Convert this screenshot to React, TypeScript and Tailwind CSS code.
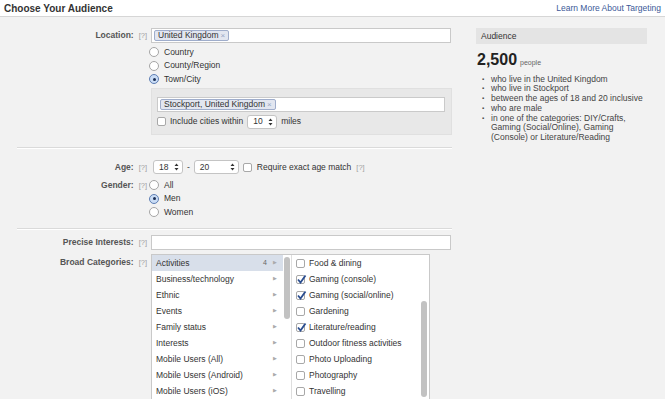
import React from "react";

function Help() {
  return <span className="text-[#a0a0a0] font-normal ml-[5px] text-[7.5px]">[?]</span>;
}

function Radio({ checked }: { checked?: boolean }) {
  return checked ? (
    <span className="w-[10px] h-[10px] rounded-full border border-[#5f7fb4] bg-[#c9dcf5] flex items-center justify-center shrink-0">
      <span className="w-[3px] h-[3px] rounded-full bg-[#1b2f55]" />
    </span>
  ) : (
    <span className="w-[10px] h-[10px] rounded-full border border-[#a5a5a5] bg-white shrink-0" />
  );
}

function Check({ checked }: { checked?: boolean }) {
  return (
    <span className="relative w-[9px] h-[9px] rounded-[2px] border border-[#a8a8a8] bg-white shrink-0">
      {checked && (
        <svg className="absolute -left-[1px] -top-[2px]" width="11" height="11" viewBox="0 0 11 11">
          <path d="M2 5.5 L4.5 8.5 L9.5 1.5" fill="none" stroke="#2a4d8f" strokeWidth="1.8" />
        </svg>
      )}
    </span>
  );
}

function Select({ value, width }: { value: string; width: string }) {
  return (
    <span className={`${width} h-[14px] flex items-center justify-between bg-white border border-[#c4c4c4] rounded-[3px] pl-[5px] pr-[3px] text-[8.5px] text-[#333]`}>
      {value}
      <svg width="5" height="8" viewBox="0 0 5 8">
        <path d="M0.5 3 L2.5 0.5 L4.5 3 Z M0.5 5 L2.5 7.5 L4.5 5 Z" fill="#333" />
      </svg>
    </span>
  );
}

function Token({ label }: { label: string }) {
  return (
    <span className="h-[11px] flex items-center bg-[#e2e6f0] border border-[#9fadcb] rounded-[2px] px-[3px] text-[8.5px] text-[#333]">
      {label}
      <span className="text-[#98a6c4] ml-[2px] text-[8px]">×</span>
    </span>
  );
}

function Label({ text }: { text: string }) {
  return (
    <div className="w-[147px] shrink-0 text-right font-bold text-[#555] text-[8.5px]">
      {text}
      <Help />
    </div>
  );
}

function Separator() {
  return <div className="ml-[17px] w-[435px] h-[2px] border-t border-[#dadada] border-b border-b-white" />;
}

const categories = [
  "Activities",
  "Business/technology",
  "Ethnic",
  "Events",
  "Family status",
  "Interests",
  "Mobile Users (All)",
  "Mobile Users (Android)",
  "Mobile Users (iOS)",
];

const activities: [string, boolean][] = [
  ["Food & dining", false],
  ["Gaming (console)", true],
  ["Gaming (social/online)", true],
  ["Gardening", false],
  ["Literature/reading", true],
  ["Outdoor fitness activities", false],
  ["Photo Uploading", false],
  ["Photography", false],
  ["Travelling", false],
];

export default function App() {
  return (
    <div className="w-[665px] h-[399px] overflow-hidden bg-[#f2f2f2] font-['Liberation_Sans',Arial,sans-serif] text-[#333] text-[8.5px]">
      <div className="h-[17px] bg-white border-b border-[#d6d6d6] flex items-center justify-between px-[4px]">
        <span className="font-bold text-[10px] text-[#333]">Choose Your Audience</span>
        <span className="text-[#3b5998] text-[8.5px]">Learn More About Targeting</span>
      </div>

      <div className="flex">
        <div className="w-[460px] shrink-0 pt-[11px]">
          {/* Location */}
          <div className="flex">
            <div className="h-[15px] flex items-center">
              <Label text="Location:" />
            </div>
            <div className="ml-[4px]">
              <div className="w-[300px] h-[15px] bg-white border border-[#c9c9c9] flex items-center pl-[2px]">
                <Token label="United Kingdom" />
              </div>
              <div className="-ml-[2px] pt-[2.5px]">
                {[["Country", false], ["County/Region", false], ["Town/City", true]].map(([t, c]) => (
                  <div key={t as string} className="h-[13.5px] flex items-center gap-[5px]">
                    <Radio checked={c as boolean} />
                    <span>{t as string}</span>
                  </div>
                ))}
              </div>
              <div className="mt-[2px] w-[301px] h-[47px] bg-[#e8e8e8] border border-[#e0e0e0] pt-[8px] pl-[5px]">
                <div className="w-[288px] h-[15px] bg-white border border-[#cacaca] flex items-center pl-[2px]">
                  <Token label="Stockport, United Kingdom" />
                </div>
                <div className="h-[17px] flex items-center gap-[4px] mt-[1px]">
                  <Check />
                  <span>Include cities within</span>
                  <Select value="10" width="w-[30px]" />
                  <span>miles</span>
                </div>
              </div>
            </div>
          </div>

          <div className="mt-[12px]">
            <Separator />
          </div>

          {/* Age */}
          <div className="flex items-center mt-[11px] h-[14px]">
            <Label text="Age:" />
            <div className="ml-[6px] flex items-center gap-[4px]">
              <Select value="18" width="w-[30px]" />
              <span>-</span>
              <Select value="20" width="w-[45px]" />
              <Check />
              <span className="ml-[1px]">
                Require exact age match
                <Help />
              </span>
            </div>
          </div>

          {/* Gender */}
          <div className="flex mt-[4.5px]">
            <div className="h-[13.5px] flex items-center">
              <Label text="Gender:" />
            </div>
            <div className="ml-[2px]">
              {[["All", false], ["Men", true], ["Women", false]].map(([t, c]) => (
                <div key={t as string} className="h-[13.5px] flex items-center gap-[5px]">
                  <Radio checked={c as boolean} />
                  <span>{t as string}</span>
                </div>
              ))}
            </div>
          </div>

          <div className="mt-[9px]">
            <Separator />
          </div>

          {/* Precise interests */}
          <div className="flex items-center mt-[5px]">
            <Label text="Precise Interests:" />
            <div className="ml-[4px] w-[300px] h-[15px] bg-white border border-[#c9c9c9]" />
          </div>

          {/* Broad categories */}
          <div className="flex mt-[4px]">
            <div className="h-[16px] flex items-center">
              <Label text="Broad Categories:" />
            </div>
            <div className="ml-[4px] w-[279px] h-[160px] bg-white border border-[#c9c9c9] flex">
              <div className="w-[131px] shrink-0">
                {categories.map((c, i) => (
                  <div
                    key={c}
                    className={`h-[16px] flex items-center justify-between pl-[4px] pr-[6px] ${i === 0 ? "bg-[#d8dfea]" : ""}`}
                  >
                    <span>{c}</span>
                    <span className="flex items-center gap-[6px] text-[#aaa] text-[5px]">
                      {i === 0 && <span className="text-[7px] text-[#666]">4</span>}
                      <span>▶</span>
                    </span>
                  </div>
                ))}
              </div>
              <div className="w-[8px] shrink-0 pt-[2px] flex justify-center">
                <div className="w-[6px] h-[62px] rounded-full bg-[#c2c2c2]" />
              </div>
              <div className="w-[1px] bg-[#dedede]" />
              <div className="flex-1 flex">
                <div className="flex-1 pl-[4px]">
                  {activities.map(([t, c]) => (
                    <div key={t} className="h-[16px] flex items-center gap-[4px]">
                      <Check checked={c} />
                      <span>{t}</span>
                    </div>
                  ))}
                </div>
                <div className="w-[10px] shrink-0 pt-[46px] flex justify-center">
                  <div className="w-[6px] h-[96px] rounded-full bg-[#c2c2c2]" />
                </div>
              </div>
            </div>
          </div>
        </div>

        {/* Audience panel */}
        <div className="ml-[16px] w-[171px] pt-[11px]">
          <div className="h-[16px] bg-[#e4e4e4] flex items-center pl-[5px] text-[8.5px] text-[#333]">
            Audience
          </div>
          <div className="mt-[8px] flex items-baseline pl-[1px]">
            <span className="text-[16px] font-bold text-[#222] leading-[16px]">2,500</span>
            <span className="ml-[3px] text-[7px] text-[#666]">people</span>
          </div>
          <ul className="mt-[6px] pl-[6px] leading-[9.8px] text-[#444]">
            {[
              "who live in the United Kingdom",
              "who live in Stockport",
              "between the ages of 18 and 20 inclusive",
              "who are male",
              "in one of the categories: DIY/Crafts, Gaming (Social/Online), Gaming (Console) or Literature/Reading",
            ].map((t) => (
              <li key={t} className="flex">
                <span className="w-[9px] shrink-0 text-[6px]">▪</span>
                <span>{t}</span>
              </li>
            ))}
          </ul>
        </div>
      </div>
    </div>
  );
}
